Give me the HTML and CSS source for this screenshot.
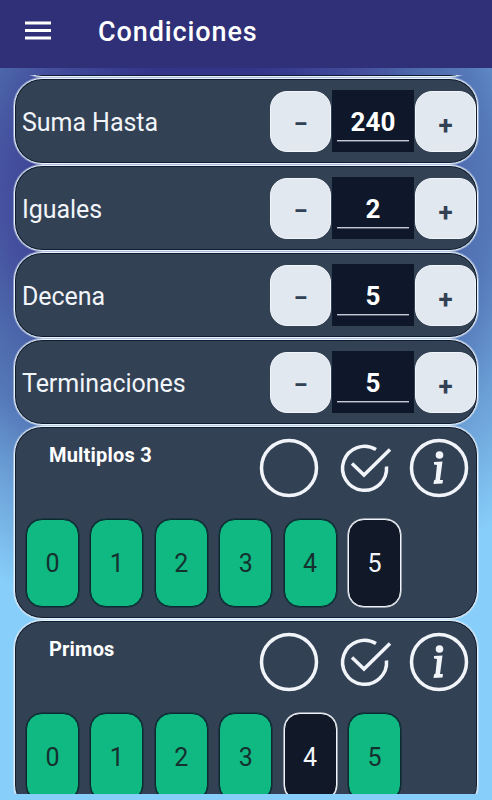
FILE: index.html
```html
<!DOCTYPE html>
<html lang="es">
<head>
<meta charset="utf-8">
<title>Condiciones</title>
<link rel="stylesheet" href="styles.css">
</head>
<body>
<svg class="defs" aria-hidden="true">
  <symbol id="circle" viewBox="0 0 60 60"><circle cx="30" cy="30" r="27.500" /></symbol>
  <symbol id="check" viewBox="0 0 60 60"><path d="M42 11.500A22 22 0 1 0 52.500 28.500" /><path d="M18 25.500L30 37L56 11.500" /></symbol>
  <symbol id="info" viewBox="0 0 60 60"><circle cx="30" cy="30" r="27.500" /><circle class="solid" cx="30.500" cy="17" r="3.800" /><path class="solid" d="M25 24L33.500 23.500L31 42L34 42L33.500 45.500L24.500 46L25 42.500L26.500 41.500L28 27L25 26.500Z" /></symbol>
</svg>
<header class="bar">
  <svg class="menu" viewBox="0 0 26 20"><path d="M0 2H26M0 9.500H26M0 17H26" /></svg>
  <h1>Condiciones</h1>
</header>
<main class="list">
  <div class="card peek"></div>
  <section class="card row"><span class="label">Suma Hasta</span><button class="minus">–</button><div class="field"><span>240</span></div><button>+</button></section>
  <section class="card row"><span class="label">Iguales</span><button class="minus">–</button><div class="field"><span>2</span></div><button>+</button></section>
  <section class="card row"><span class="label">Decena</span><button class="minus">–</button><div class="field"><span>5</span></div><button>+</button></section>
  <section class="card row"><span class="label">Terminaciones</span><button class="minus">–</button><div class="field"><span>5</span></div><button>+</button></section>
  <section class="card group">
    <div class="head"><h2>Multiplos 3</h2><svg class="icon"><use href="#circle" /></svg><svg class="icon"><use href="#check" /></svg><svg class="icon"><use href="#info" /></svg></div>
    <div class="chips"><span>0</span><span>1</span><span>2</span><span>3</span><span>4</span><span class="off">5</span></div>
  </section>
  <section class="card group">
    <div class="head"><h2>Primos</h2><svg class="icon"><use href="#circle" /></svg><svg class="icon"><use href="#check" /></svg><svg class="icon"><use href="#info" /></svg></div>
    <div class="chips"><span>0</span><span>1</span><span>2</span><span>3</span><span class="off">4</span><span>5</span></div>
  </section>
</main>
</body>
</html>
```

FILE: styles.css
```css
* { box-sizing: border-box; }
body {
  margin: 0;
  height: 800px;
  overflow: hidden;
  display: flex;
  flex-direction: column;
  font-family: Roboto, sans-serif;
  color: #f1f5f9;
  background: radial-gradient(circle at 205px 190px, #2e2f78 0, #33358a 130px, #4653a0 205px, #4c68ab 240px, #5578b8 287px, #6a9ed5 345px, #87cefa 440px);
}
.defs { display: none; }
.bar {
  flex: none;
  height: 68px;
  background: #2f3077;
  display: flex;
  align-items: center;
  padding: 0 25px 6px;
}
.menu { width: 26px; height: 20px; margin-top: -1px; fill: none; stroke: #fff; stroke-width: 2.8; }
h1 { margin: 2px 0 0 47px; font-size: 27px; font-weight: 500; letter-spacing: .9px; line-height: 32px; color: #fff; }
.list { height: 719px; margin-top: 7px; flex: none; overflow: hidden; padding: 0 14px; }
.card {
  width: 464px;
  background: #334155;
  border: 1px solid #e9f3fc;
  border-radius: 28px;
  box-shadow: inset 0 0 0 1px #101c30, 0 0 0 1px rgba(224, 237, 250, .45);
  margin-bottom: 1px;
}
.peek { height: 86px; margin-top: -84px; }
.row { height: 86px; display: flex; align-items: center; padding: 0 1px 0 7px; }
.label { flex: 1; padding-top: 3px; font-size: 25px; line-height: 32px; letter-spacing: -.05px; }
button {
  width: 61px;
  height: 61px;
  padding: 7px 0 0;
  border: 1px solid #f1f5f9;
  border-radius: 17px;
  background: #e2e8f0;
  color: #334155;
  font: 700 26px/32px Roboto, sans-serif;
}
.minus { font-size: 21px; font-weight: 900; padding-top: 6px; }
.field { width: 82px; height: 62px; margin: 0 1px; padding: 0 5px; background: #0f172a; }
.field span {
  display: block;
  height: 51px;
  padding-top: 16px;
  border-bottom: 1px solid #c4c8d2;
  box-shadow: 0 1px #5b6170;
  text-align: center;
  font-size: 26px;
  line-height: 32px;
  font-weight: 700;
  color: #fff;
}
.group { height: 193px; padding: 11px 8px 0 11px; }
.head { display: flex; align-items: flex-start; gap: 15px; height: 81px; }
h2 { flex: 1; margin: 5px 0 0 23px; font-size: 20px; letter-spacing: .2px; line-height: 24px; font-weight: 700; color: #fff; }
.icon { width: 60px; height: 60px; fill: none; stroke: #f1f5f9; stroke-width: 3.5; }
.solid { fill: #f1f5f9; stroke: none; }
.chips { display: flex; gap: 11.4px; }
.chips span {
  width: 53px;
  height: 88px;
  border: 1px solid #0c2a31;
  box-shadow: 0 0 0 .5px #0c2a31;
  border-radius: 16px;
  background: #10b981;
  color: #15302f;
  text-align: center;
  font-size: 25px;
  line-height: 87px;
}
.chips .off { background: #111827; border-color: #f1f5f9; box-shadow: 0 0 0 .5px #f1f5f9; color: #f1f5f9; }
```
